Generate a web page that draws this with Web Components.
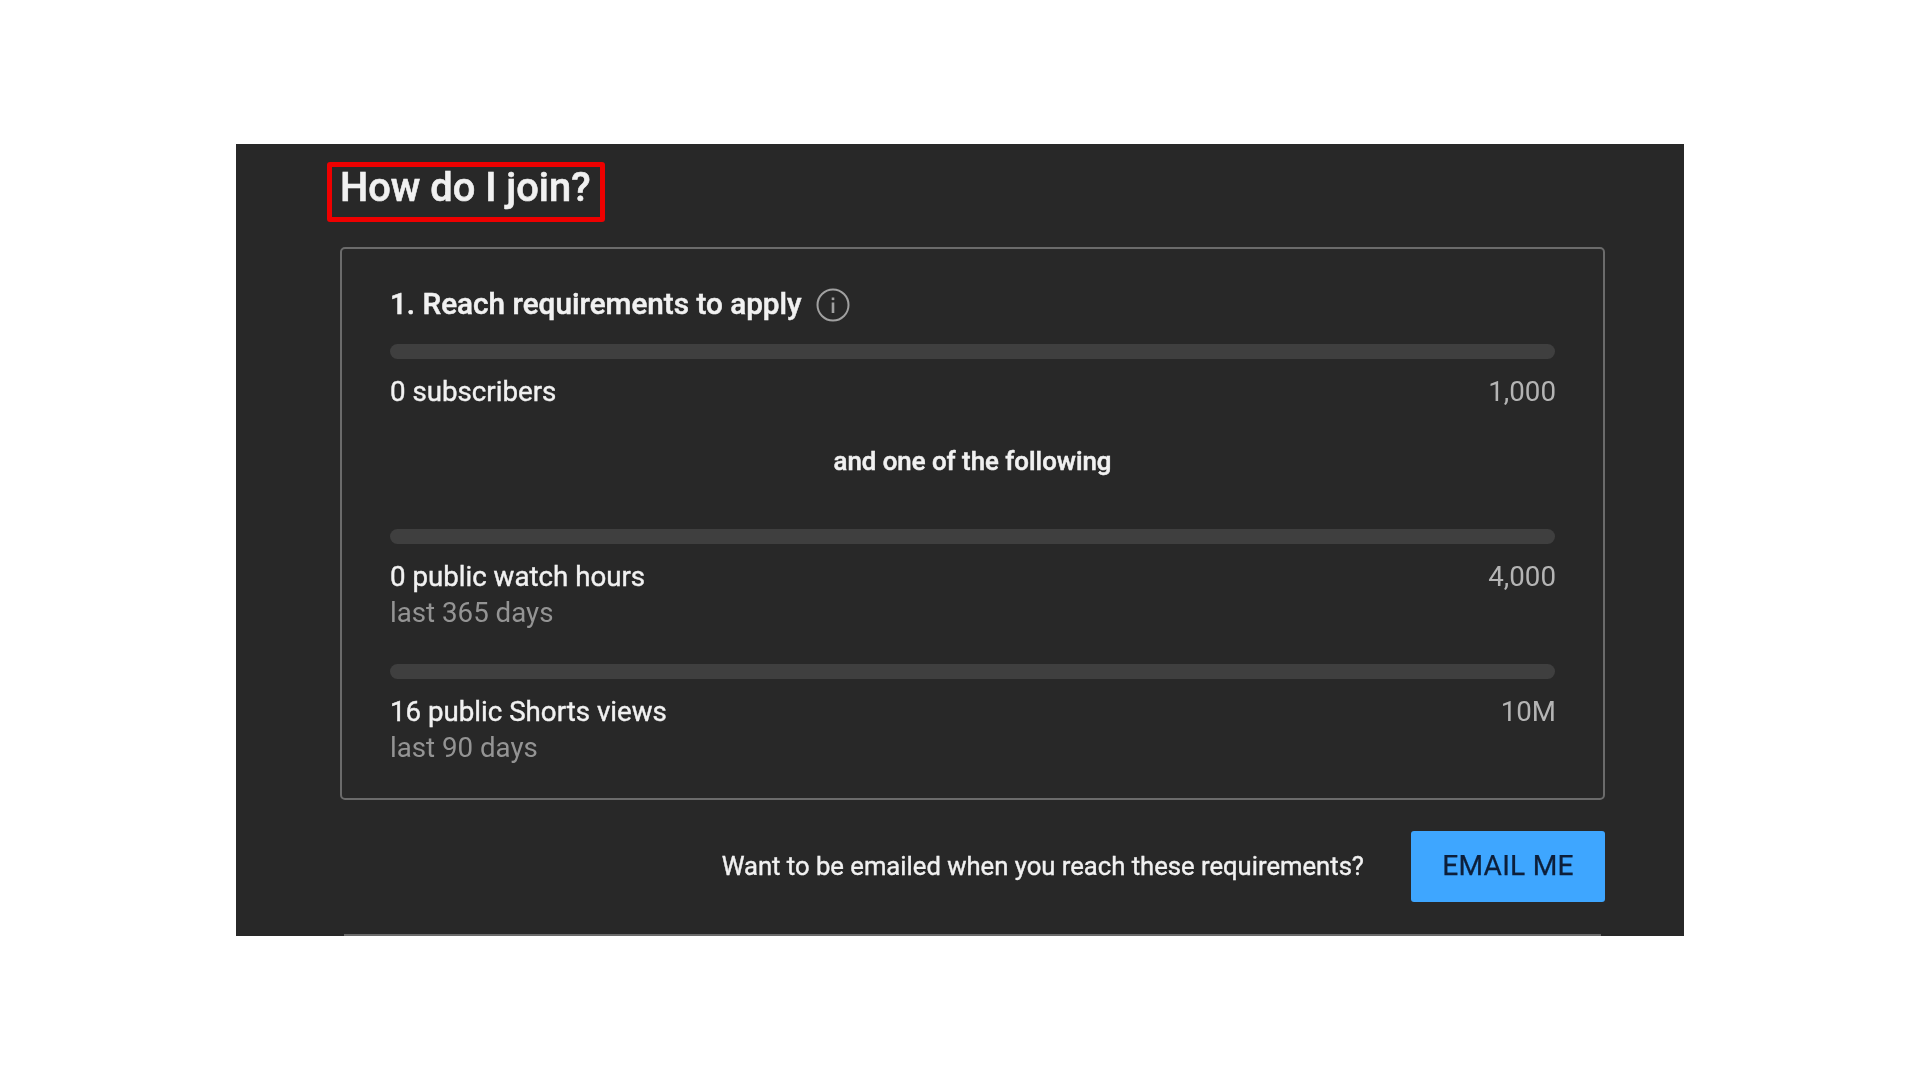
<!DOCTYPE html>
<html>
<head>
<meta charset="utf-8">
<title>How do I join?</title>
<style>
  html, body { margin: 0; background: #fff; }
  body { font-family: Roboto, "Liberation Sans", sans-serif; }
</style>
</head>
<body>
<join-panel heading="How do I join?">
  <req-card heading="1. Reach requirements to apply">
    <req-meter label="0 subscribers" goal="1,000"></req-meter>
    <div slot="divider">and one of the following</div>
    <req-meter label="0 public watch hours" sub="last 365 days" goal="4,000"></req-meter>
    <req-meter label="16 public Shorts views" sub="last 90 days" goal="10M"></req-meter>
  </req-card>
  <email-row slot="footer" text="Want to be emailed when you reach these requirements?" action="EMAIL ME"></email-row>
</join-panel>

<script>
class JoinPanel extends HTMLElement {
  constructor() {
    super();
    this.attachShadow({ mode: "open" });
    this.shadowRoot.innerHTML = `
      <style>
        :host {
          display: block;
          box-sizing: border-box;
          width: 1448px;
          height: 792px;
          margin: 144px 0 0 236px;
          padding: 18px 79px 0 104px;
          background: #282828;
          color: #f1f1f1;
          overflow: hidden;
          position: relative;
          filter: blur(0.45px);
        }
        h2 {
          display: block;
          position: relative;
          margin: 0 0 25px;
          height: 60px;
          font: 500 39.8px/52px Roboto, sans-serif;
          -webkit-text-stroke: 0.6px #f1f1f1;
          width: max-content;
        }
        h2::before {
          content: "";
          position: absolute;
          left: -13px;
          top: 0;
          width: 278px;
          height: 60px;
          box-sizing: border-box;
          border: 5px solid #ee0000;
          border-radius: 3px;
        }
        .rule {
          position: absolute;
          left: 108px;
          right: 83px;
          bottom: 0;
          height: 2px;
          background: #6a6a6a;
        }
      </style>
      <h2></h2>
      <slot></slot>
      <slot name="footer"></slot>
      <div class="rule"></div>
    `;
  }

  connectedCallback() {
    this.shadowRoot.querySelector("h2").textContent = this.getAttribute("heading");
  }
}

class ReqCard extends HTMLElement {
  constructor() {
    super();
    this.attachShadow({ mode: "open" });
    this.shadowRoot.innerHTML = `
      <style>
        :host {
          display: block;
          box-sizing: border-box;
          height: 553px;
          padding: 36px 48px 0 48px;
          border: 2px solid #6b6b6b;
          border-radius: 5px;
        }
        header {
          display: flex;
          align-items: center;
          gap: 14px;
          height: 38px;
          margin-bottom: 21px;
          font: 500 29.7px/38px Roboto, sans-serif;
          -webkit-text-stroke: 0.5px #f1f1f1;
        }
        svg { width: 34px; height: 34px; display: block; margin-top: 2px; }
        ::slotted([slot="divider"]) {
          text-align: center;
          font: 500 25.8px/32px Roboto, sans-serif;
          -webkit-text-stroke: 0.5px #f1f1f1;
          margin: 0 0 52px;
          color: #f1f1f1;
        }
      </style>
      <header>
        <span></span>
        <svg viewBox="0 0 34 34" fill="none" stroke="#a0a0a0">
          <circle cx="17" cy="17" r="15.5" stroke-width="2"/>
          <path d="M17 14.5v10.5" stroke-width="2.6"/>
          <path d="M17 9.5v2.6" stroke-width="2.6"/>
        </svg>
      </header>
      <slot name="first"></slot>
      <slot name="divider"></slot>
      <slot></slot>
    `;
  }

  connectedCallback() {
    this.shadowRoot.querySelector("header span").textContent = this.getAttribute("heading");
    // first meter sits above the divider text
    const first = this.querySelector("req-meter");
    if (first) first.setAttribute("slot", "first");
  }
}

class ReqMeter extends HTMLElement {
  constructor() {
    super();
    this.attachShadow({ mode: "open" });
    this.shadowRoot.innerHTML = `
      <style>
        :host {
          display: block;
          margin-bottom: 33px;
        }
        :host([slot="first"]) { margin-bottom: 35px; }
        .track {
          height: 15px;
          border-radius: 7.5px;
          background: #3f3f3f;
          margin-bottom: 15px;
        }
        .row {
          display: flex;
          justify-content: space-between;
          font: 400 27.7px/36px Roboto, sans-serif;
        }
        .label { -webkit-text-stroke: 0.4px #f1f1f1; }
        .goal { color: #b4b4b4; margin-right: -1px; }
        .sub { font: 400 27.7px/36px Roboto, sans-serif; color: #949494; }
        .sub:empty { display: none; }
      </style>
      <div class="track"></div>
      <div class="row"><span class="label"></span><span class="goal"></span></div>
      <div class="sub"></div>
    `;
  }

  connectedCallback() {
    this.shadowRoot.querySelector(".label").textContent = this.getAttribute("label");
    this.shadowRoot.querySelector(".goal").textContent = this.getAttribute("goal");
    this.shadowRoot.querySelector(".sub").textContent = this.getAttribute("sub") || "";
  }
}

class EmailRow extends HTMLElement {
  constructor() {
    super();
    this.attachShadow({ mode: "open" });
    this.shadowRoot.innerHTML = `
      <style>
        :host {
          display: flex;
          justify-content: flex-end;
          align-items: center;
          gap: 47px;
          margin-top: 31px;
        }
        span {
          font: 400 25.65px/36px Roboto, sans-serif;
          color: #f1f1f1;
          -webkit-text-stroke: 0.4px #f1f1f1;
          margin-bottom: 2px;
        }
        button {
          width: 194px;
          height: 71px;
          padding: 0 0 2px;
          border: 0;
          border-radius: 3px;
          background: #3ea6ff;
          color: #0d1f3a;
          font: 400 28.2px/36px Roboto, sans-serif;
          letter-spacing: 0.2px;
          -webkit-text-stroke: 0.25px #0d1f3a;
        }
      </style>
      <span></span>
      <button type="button"></button>
    `;
  }

  connectedCallback() {
    this.shadowRoot.querySelector("span").textContent = this.getAttribute("text");
    this.shadowRoot.querySelector("button").textContent = this.getAttribute("action");
  }
}

customElements.define("join-panel", JoinPanel);
customElements.define("req-card", ReqCard);
customElements.define("req-meter", ReqMeter);
customElements.define("email-row", EmailRow);
</script>
</body>
</html>
